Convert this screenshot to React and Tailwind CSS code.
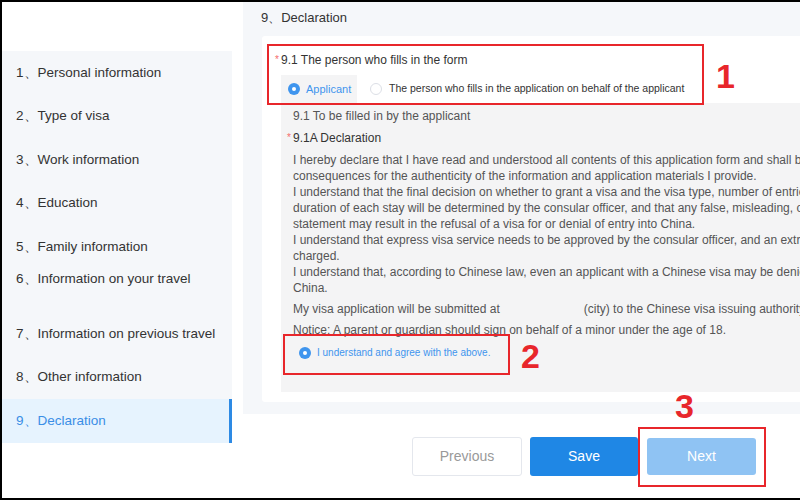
const font = { fontFamily: '"Liberation Sans", Arial, sans-serif' };

const steps = [
  { n: 1, label: "Personal information" },
  { n: 2, label: "Type of visa" },
  { n: 3, label: "Work information" },
  { n: 4, label: "Education" },
  { n: 5, label: "Family information" },
  { n: 6, label: "Information on your travel", top: true },
  { n: 7, label: "Information on previous travel" },
  { n: 8, label: "Other information" },
  { n: 9, label: "Declaration", active: true },
];

function Radio({ checked }) {
  if (checked) {
    return (
      <span className="flex h-[12px] w-[12px] shrink-0 items-center justify-center rounded-full bg-[#3f95ee]">
        <span className="h-[4px] w-[4px] rounded-full bg-white" />
      </span>
    );
  }
  return <span className="h-[12px] w-[12px] shrink-0 rounded-full border border-[#dcdfe6] bg-white" />;
}

function Mark({ className }) {
  return <div className={"pointer-events-none absolute border-2 border-[#e8262b] " + className} />;
}

function Num({ children, className }) {
  return (
    <div
      className={"pointer-events-none absolute text-[34px] font-bold leading-none text-[#e8262b] " + className}
      style={font}
    >
      {children}
    </div>
  );
}

export default function App() {
  const lines = [
    "I hereby declare that I have read and understood all contents of this application form and shall bear all legal",
    "consequences for the authenticity of the information and application materials I provide.",
    "I understand that the final decision on whether to grant a visa and the visa type, number of entries, validity and",
    "duration of each stay will be determined by the consular officer, and that any false, misleading, or incomplete",
    "statement may result in the refusal of a visa for or denial of entry into China.",
    "I understand that express visa service needs to be approved by the consular officer, and an extra fee will be",
    "charged.",
    "I understand that, according to Chinese law, even an applicant with a Chinese visa may be denied entry into",
    "China.",
  ];

  return (
    <div className="relative flex h-[500px] w-[800px] overflow-hidden bg-white" style={font}>
      {/* sidebar */}
      <div className="w-[232px] shrink-0 pt-[51px]">
        <div className="flex flex-col bg-[#f5f7fa]">
          {steps.map((s) => (
            <div
              key={s.n}
              className={
                "flex h-[43.5px] pl-[16px] text-[13.5px] " +
                (s.top ? "items-start pt-[2px] " : "items-center ") +
                (s.active ? "border-r-[3px] border-[#2d8ae4] bg-[#e6f3fe] text-[#3a8ee6]" : "text-[#333]")
              }
            >
              <span className="leading-4">
                {s.n}、{s.label}
              </span>
            </div>
          ))}
        </div>
      </div>

      {/* main */}
      <div className="ml-[11px] w-[620px] shrink-0">
        <div className="h-[414px] bg-[#f5f7fa] pl-[18px] pt-[10px]">
          <div className="text-[13px] leading-4 text-[#333]">9、Declaration</div>
          <div className="ml-px mt-[10px] h-[366px] rounded-[3px] bg-white pl-[19px] pt-[16px]">
            <div className="relative text-[12px] leading-4 text-[#333]">
              <span className="absolute -left-[6px] top-0 text-[10px] text-[#f56c6c]">*</span>
              9.1 The person who fills in the form
            </div>
            <div className="mt-[7px] flex h-[28px] items-center">
              <div className="flex h-full w-[76px] items-center gap-[6px] bg-[#f4f4f5] pl-[7px] text-[11px] text-[#3f95ee]">
                <Radio checked />
                <span>Applicant</span>
              </div>
              <div className="ml-[13px] flex items-center gap-[7px] text-[10.5px] text-[#333]">
                <Radio />
                <span>The person who fills in the application on behalf of the applicant</span>
              </div>
            </div>
            <div className="h-[289px] bg-[#f4f4f5] pl-[12px] pt-[5px] text-[12px] leading-4 text-[#555]">
              <div>9.1 To be filled in by the applicant</div>
              <div className="relative mt-[6px] text-[#333]">
                <span className="absolute -left-[6px] top-0 text-[10px] text-[#f56c6c]">*</span>
                9.1A Declaration
              </div>
              <div className="mt-[6px]">
                {lines.map((l, i) => (
                  <div key={i} className="whitespace-nowrap">
                    {l}
                  </div>
                ))}
              </div>
              <div className="mt-[5px] whitespace-nowrap">
                My visa application will be submitted at
                <span className="inline-block w-[84px]" />
                (city) to the Chinese visa issuing authority.
              </div>
              <div className="mt-[5px] whitespace-nowrap">
                Notice: A parent or guardian should sign on behalf of a minor under the age of 18.
              </div>
              <div className="mt-[7px] flex items-center gap-[6px] pl-[6px] text-[10px] text-[#3f95ee]">
                <Radio checked />
                <span>I understand and agree with the above.</span>
              </div>
            </div>
          </div>
        </div>

        <div className="mt-[23px] flex items-center pl-[169px] text-[14px]">
          <button className="h-[39px] w-[110px] rounded-[3px] border border-[#e4e7ed] bg-white text-[#999]">
            Previous
          </button>
          <button className="ml-[8px] h-[39px] w-[108px] rounded-[3px] bg-[#1f87e5] text-white">Save</button>
          <button className="ml-[9px] h-[37px] w-[109px] rounded-[3px] bg-[#8fc3f3] text-white">Next</button>
        </div>
      </div>

      {/* annotations */}
      <Mark className="left-[267px] top-[44px] h-[61px] w-[437px]" />
      <Num className="left-[716px] top-[59px]">1</Num>
      <Mark className="left-[283px] top-[334px] h-[41px] w-[227px]" />
      <Num className="left-[521px] top-[339px]">2</Num>
      <Num className="left-[675px] top-[389px]">3</Num>
      <Mark className="left-[638px] top-[427px] h-[60px] w-[128px]" />

      {/* frame */}
      <div className="pointer-events-none absolute inset-0 border-2 border-r-0 border-black" />
    </div>
  );
}
